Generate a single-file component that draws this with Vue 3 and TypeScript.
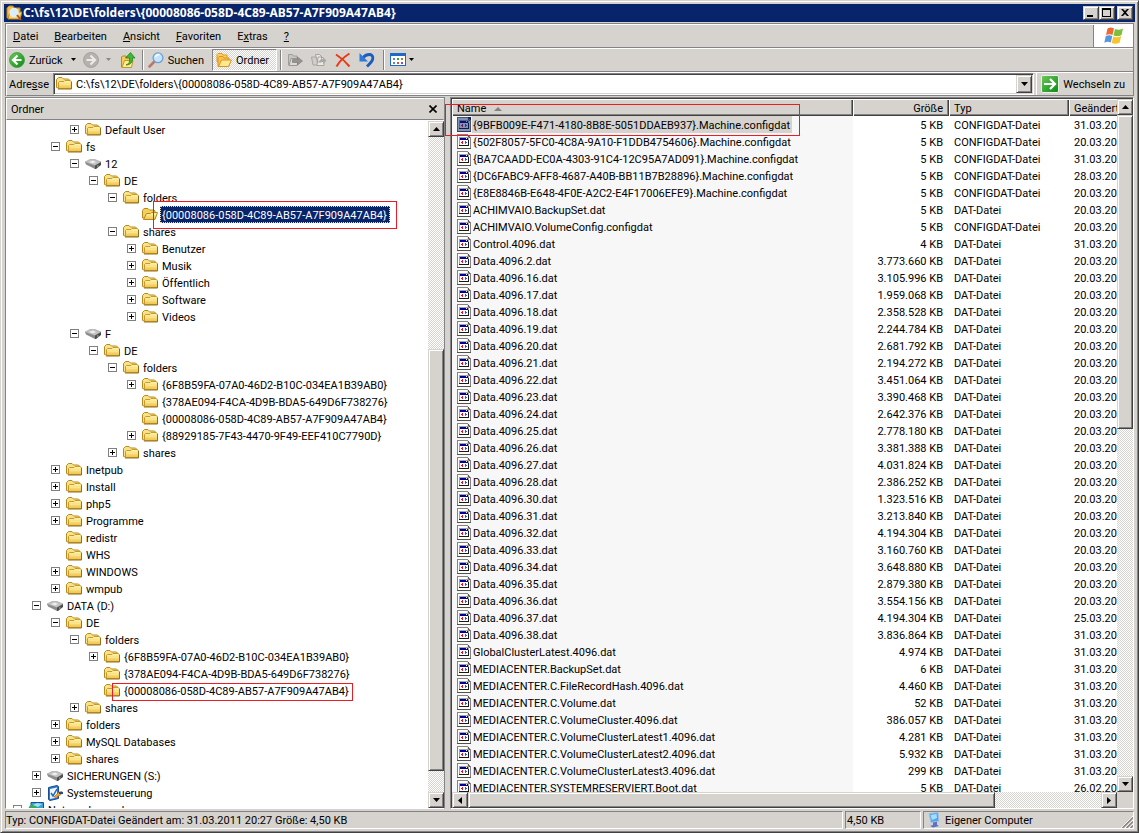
<script setup lang="ts">
import { ref } from 'vue'

interface TreeNode {
  level: number
  label: string
  icon: 'folder' | 'open' | 'drive' | 'panel' | 'network'
  toggle: '+' | '-' | ''
}
interface FileEntry {
  name: string
  size: string
  type: string
  date: string
}

const path = ref('C:\\fs\\12\\DE\\folders\\{00008086-058D-4C89-AB57-A7F909A47AB4}')

const menus = [
  ['', 'D', 'atei'],
  ['', 'B', 'earbeiten'],
  ['', 'A', 'nsicht'],
  ['', 'F', 'avoriten'],
  ['E', 'x', 'tras'],
  ['', '?', ''],
]

const node = (
  level: number,
  toggle: TreeNode['toggle'],
  label: string,
  icon: TreeNode['icon'] = 'folder',
): TreeNode => ({ level, toggle, label, icon })

const tree: TreeNode[] = [
  node(2, '+', 'Default User'),
  node(1, '-', 'fs'),
  node(2, '-', '12', 'drive'),
  node(3, '-', 'DE'),
  node(4, '-', 'folders'),
  node(5, '', '{00008086-058D-4C89-AB57-A7F909A47AB4}', 'open'),
  node(4, '-', 'shares'),
  node(5, '+', 'Benutzer'),
  node(5, '+', 'Musik'),
  node(5, '+', 'Öffentlich'),
  node(5, '+', 'Software'),
  node(5, '+', 'Videos'),
  node(2, '-', 'F', 'drive'),
  node(3, '-', 'DE'),
  node(4, '-', 'folders'),
  node(5, '+', '{6F8B59FA-07A0-46D2-B10C-034EA1B39AB0}'),
  node(5, '', '{378AE094-F4CA-4D9B-BDA5-649D6F738276}'),
  node(5, '', '{00008086-058D-4C89-AB57-A7F909A47AB4}'),
  node(5, '+', '{88929185-7F43-4470-9F49-EEF410C7790D}'),
  node(4, '+', 'shares'),
  node(1, '+', 'Inetpub'),
  node(1, '+', 'Install'),
  node(1, '+', 'php5'),
  node(1, '+', 'Programme'),
  node(1, '', 'redistr'),
  node(1, '', 'WHS'),
  node(1, '+', 'WINDOWS'),
  node(1, '+', 'wmpub'),
  node(0, '-', 'DATA (D:)', 'drive'),
  node(1, '-', 'DE'),
  node(2, '-', 'folders'),
  node(3, '+', '{6F8B59FA-07A0-46D2-B10C-034EA1B39AB0}'),
  node(3, '', '{378AE094-F4CA-4D9B-BDA5-649D6F738276}'),
  node(3, '', '{00008086-058D-4C89-AB57-A7F909A47AB4}'),
  node(2, '+', 'shares'),
  node(1, '+', 'folders'),
  node(1, '+', 'MySQL Databases'),
  node(1, '+', 'shares'),
  node(0, '+', 'SICHERUNGEN (S:)', 'drive'),
  node(0, '+', 'Systemsteuerung', 'panel'),
  node(-1, '-', 'Netzwerkumgebung', 'network'),
]
const selectedNode = 5

const file = (name: string, size: string, day = '20.03', type = 'DAT-Datei'): FileEntry => ({
  name,
  size: size + ' KB',
  type,
  date: day + '.2011',
})
const CONFIG = 'CONFIGDAT-Datei'

const files: FileEntry[] = [
  file('{9BFB009E-F471-4180-8B8E-5051DDAEB937}.Machine.configdat', '5', '31.03', CONFIG),
  file('{502F8057-5FC0-4C8A-9A10-F1DDB4754606}.Machine.configdat', '5', '20.03', CONFIG),
  file('{BA7CAADD-EC0A-4303-91C4-12C95A7AD091}.Machine.configdat', '5', '31.03', CONFIG),
  file('{DC6FABC9-AFF8-4687-A40B-BB11B7B28896}.Machine.configdat', '5', '28.03', CONFIG),
  file('{E8E8846B-E648-4F0E-A2C2-E4F17006EFE9}.Machine.configdat', '5', '20.03', CONFIG),
  file('ACHIMVAIO.BackupSet.dat', '5'),
  file('ACHIMVAIO.VolumeConfig.configdat', '5', '20.03', CONFIG),
  file('Control.4096.dat', '4', '31.03'),
  file('Data.4096.2.dat', '3.773.660'),
  file('Data.4096.16.dat', '3.105.996'),
  file('Data.4096.17.dat', '1.959.068'),
  file('Data.4096.18.dat', '2.358.528'),
  file('Data.4096.19.dat', '2.244.784'),
  file('Data.4096.20.dat', '2.681.792'),
  file('Data.4096.21.dat', '2.194.272'),
  file('Data.4096.22.dat', '3.451.064'),
  file('Data.4096.23.dat', '3.390.468'),
  file('Data.4096.24.dat', '2.642.376'),
  file('Data.4096.25.dat', '2.778.180'),
  file('Data.4096.26.dat', '3.381.388'),
  file('Data.4096.27.dat', '4.031.824'),
  file('Data.4096.28.dat', '2.386.252'),
  file('Data.4096.30.dat', '1.323.516'),
  file('Data.4096.31.dat', '3.213.840'),
  file('Data.4096.32.dat', '4.194.304'),
  file('Data.4096.33.dat', '3.160.760'),
  file('Data.4096.34.dat', '3.648.880'),
  file('Data.4096.35.dat', '2.879.380'),
  file('Data.4096.36.dat', '3.554.156'),
  file('Data.4096.37.dat', '4.194.304', '25.03'),
  file('Data.4096.38.dat', '3.836.864', '31.03'),
  file('GlobalClusterLatest.4096.dat', '4.974', '31.03'),
  file('MEDIACENTER.BackupSet.dat', '6', '31.03'),
  file('MEDIACENTER.C.FileRecordHash.4096.dat', '4.460', '31.03'),
  file('MEDIACENTER.C.Volume.dat', '52', '31.03'),
  file('MEDIACENTER.C.VolumeCluster.4096.dat', '386.057', '31.03'),
  file('MEDIACENTER.C.VolumeClusterLatest1.4096.dat', '4.281', '31.03'),
  file('MEDIACENTER.C.VolumeClusterLatest2.4096.dat', '5.932', '31.03'),
  file('MEDIACENTER.C.VolumeClusterLatest3.4096.dat', '299', '31.03'),
  file('MEDIACENTER.SYSTEMRESERVIERT.Boot.dat', '5', '26.02'),
]
const selectedFile = ref(0)

const treeThumb = { top: '32.3%', height: '64.5%' }
const listThumb = { top: '0%', height: '47.5%' }
const rowThumb = { left: '0%', width: '83.2%' }
</script>

<template>
  <div class="window">
    <svg class="defs" aria-hidden="true">
      <defs>
        <linearGradient id="gold" x1="0" y1="0" x2="0" y2="1">
          <stop offset="0" stop-color="#fff7b0" />
          <stop offset="1" stop-color="#efc24a" />
        </linearGradient>
        <linearGradient id="green" x1="0" y1="0" x2="1" y2="1">
          <stop offset="0" stop-color="#6cc95a" />
          <stop offset="1" stop-color="#0a8a14" />
        </linearGradient>
        <symbol id="i-folder" viewBox="0 0 16 16">
          <path d="M.5 11.500V3.500L2.500 1.500h3.500l1.500 1.500H12.500l1 1V12H2z" fill="#f7e28a" stroke="#b88a1e" />
          <path d="M2.500 12.500V6.500l1-1h4.500l1-1H14l1.500 1v7z" fill="url(#gold)" stroke="#c79a2a" />
          <path d="M4 8.500h10" stroke="#fbe58c" />
          <path d="M2 13h13.500V6" fill="none" stroke="#94701a" />
        </symbol>
        <symbol id="i-open" viewBox="0 0 16 16">
          <path d="M.5 11V3.500L2 1.500h4l1.500 1.500H12l1 1V11z" fill="#f3cf5c" stroke="#b88a1e" />
          <path d="M1.500 12.500 4.500 6.500h4l1-1h6L13 12.500z" fill="url(#gold)" stroke="#b88a1e" />
        </symbol>
        <symbol id="i-drive" viewBox="0 0 16 16">
          <path d="M0 6 5 3.500h5l6 2.500-6 4z" fill="#c2c2c2" stroke="#a0a0a0" stroke-width=".6" />
          <path d="M0 6 10 9.500v3.500L1 8.500z" fill="#8c8c8c" />
          <path d="M10 9.500l6-3.500v3l-5 4h-1z" fill="#4c4c4c" />
          <path d="M4 6 8 4.500l3 1.500L8 7.500z" fill="#eee" />
          <path d="M12 10h1.500" stroke="#8fdc8f" />
        </symbol>
        <symbol id="i-panel" viewBox="0 0 16 16">
          <path d="M1.500 2.500 10 .5l1.500 1v12L3 15.500l-1.500-1z" fill="#2f78d0" stroke="#184c93" />
          <path d="M3 4l7-1.500v10L3 14z" fill="#eef6ff" />
          <path d="M4 8l2 3 4-7" fill="none" stroke="#1b62c4" stroke-width="1.500" />
          <path d="M7 12l5-5 3-.5-1 3-5 3z" fill="#f4a434" stroke="#a65d13" stroke-width=".6" />
          <path d="M12 7h4v2h-4z" fill="#274a8e" />
        </symbol>
        <symbol id="i-network" viewBox="0 0 16 16">
          <path d="M3 .5h12.500v9H3z" fill="#35a3dc" stroke="#1a4f93" />
          <circle cx="5" cy="7" r="4.500" fill="#36ad5b" />
          <path d="M5 3l4-2 5 1-4 3z" fill="#9de3f5" />
        </symbol>
        <symbol id="i-file" viewBox="0 0 14 15">
          <g shape-rendering="crispEdges">
            <path d="M0 0h11v1h1v1h1v1h1v12H0z" fill="#848284" />
            <path d="M1 1h9v3h3v10H1z" fill="#fffff7" />
            <path d="M11 1h1v2h1v1h-3V3h1zM0 14h14v1H0z" fill="#525152" />
            <path d="M10 1h1v2h-1z" fill="#e7e3de" />
            <path d="M2 3h10v9H2z" fill="#a5a2a5" />
            <path d="M2 12h10V6h-1v5H2z" fill="#181818" />
            <path d="M3 4h8v2H3z" fill="#00009c" />
            <path d="M9 4h1v1H9z" fill="#ffff9c" />
            <path d="M3 6h8v5H3z" fill="#fff" />
            <path d="M4 8h1v1H4zM5 7h1v3H5z" fill="#de1029" />
            <path d="M8 7h1v1h1v1H8z" fill="#215ae7" />
            <path d="M8 9h1v1H8z" fill="#18a542" />
          </g>
        </symbol>
      </defs>
    </svg>

    <header class="title-bar">
      <svg class="icon" viewBox="0 0 16 16" aria-hidden="true">
        <path d="M1 13V3l2-2h4l1 2h6v10z" fill="#f2bf48" stroke="#c6851b" />
        <path d="M2 14 4 7h12l-2 7z" fill="#f7d76d" stroke="#c6851b" />
        <circle cx="8" cy="7.500" r="4" fill="#d7effd" stroke="#e6eef4" stroke-width="1.500" />
        <path d="M11 10l4 5" stroke="#a8552b" stroke-width="2" />
      </svg>
      <h1>{{ path }}</h1>
      <div class="caption-buttons">
        <button type="button" class="raised" aria-label="Minimieren">
          <svg viewBox="0 0 12 10"><path d="M2 7h6v2H2z" /></svg>
        </button>
        <button type="button" class="raised" aria-label="Maximieren">
          <svg viewBox="0 0 12 10"><path d="M1 0h9v9H1zm1 2v6h7V2z" fill-rule="evenodd" /></svg>
        </button>
        <button type="button" class="raised close" aria-label="Schließen">
          <svg viewBox="0 0 12 10"><path d="M2 1h2l2 2 2-2h2L7 4.500 10 8H8L6 6 4 8H2l3-3.500z" /></svg>
        </button>
      </div>
    </header>

    <div class="bars">
      <nav class="band menu">
        <button v-for="m in menus" :key="m[1]" type="button">{{ m[0] }}<u>{{ m[1] }}</u>{{ m[2] }}</button>
        <span class="logo">
          <svg viewBox="0 0 20 18" aria-label="Windows">
            <path d="M3.500 1.500c2.500-1.500 4.500-1 6.500 0L8.500 8C6.500 7 4.500 7 2 8z" fill="#ee6a34" />
            <path d="M11 2c2.500 1 5 1 8-.5L17.500 8c-2.500 1.500-5.500 1.500-8 .5z" fill="#7fbe3b" />
            <path d="M1.800 9c2.500-1.200 4.500-1 6.500 0L6.800 15.500c-2-1-4-1-6.500.2z" fill="#5696e0" />
            <path d="M9.200 9.500c2.500 1 5 1 8-.5l-1.500 6.500c-2.500 1.500-5.500 1.700-8 .5z" fill="#f6c52c" />
          </svg>
        </span>
      </nav>

      <div class="band toolbar" role="toolbar" aria-label="Standardschaltflächen">
        <button type="button" class="tool back">
          <svg class="icon" viewBox="0 0 16 16">
            <circle cx="8" cy="8" r="7.500" fill="url(#green)" stroke="#3c9d3c" stroke-width=".8" />
            <path d="M8.500 3.500 4 8l4.500 4.500M4.500 8h8" fill="none" stroke="#fff" stroke-width="2.200" />
          </svg>
          <span>Zurück</span>
          <svg class="arrow" viewBox="0 0 7 4"><path d="M1 0h5L3.500 3z" /></svg>
        </button>
        <button type="button" class="tool forward" aria-label="Vorwärts" disabled>
          <svg class="icon" viewBox="0 0 16 16">
            <circle cx="8" cy="8" r="7.500" fill="#b4b2af" stroke="#9d9b98" stroke-width=".8" />
            <path d="M7.500 3.500 12 8l-4.500 4.500M11.500 8h-8" fill="none" stroke="#eceae6" stroke-width="2.200" />
          </svg>
          <svg class="arrow" viewBox="0 0 7 4"><path d="M1 0h5L3.500 3z" fill="#888" /></svg>
        </button>
        <button type="button" class="tool up" aria-label="Aufwärts">
          <svg class="icon" viewBox="0 0 16 16">
            <path d="M1.500 15V5l1-1H6l1 1.500h4V15z" fill="#f2cd58" stroke="#b98a20" />
            <path d="M2 15.500 4.500 8.500h8.500L11.500 15.500z" fill="#ffec98" stroke="#c49527" />
            <path d="M6 13c3-1 4-3 3.500-7H5.500l5-5.500L15 6h-2.500c.5 4-2 7-6.500 7z" fill="#43b539" stroke="#137a18" stroke-width=".7" />
          </svg>
        </button>
        <i class="separator"></i>
        <button type="button" class="tool search">
          <svg class="icon" viewBox="0 0 16 16">
            <path d="M7 9 1.500 14.500" stroke="#b9776a" stroke-width="2.500" stroke-linecap="round" />
            <circle cx="10" cy="5.800" r="4.900" fill="#c3e4fb" stroke="#6d9fd6" stroke-width="1.300" />
            <path d="M7.500 5c.5-2 2-2.500 4-2.500" fill="none" stroke="#fff" stroke-width="1.500" />
          </svg>
          <span>Suchen</span>
        </button>
        <button type="button" class="tool pressed" aria-pressed="true">
          <svg class="icon" viewBox="0 0 16 16">
            <path d="M1 10V2.500L2 1.500h4l1 1.500h4v6z" fill="#f9cf61" stroke="#e09a2a" />
            <path d="M2 14.500V5.500l1-1h4L8 6h5v8z" fill="#f7c34e" stroke="#dc9222" />
            <path d="M2.500 14.500 5.500 8h10l-3 6.500z" fill="#ffe98e" stroke="#dc9222" />
          </svg>
          <span>Ordner</span>
        </button>
        <i class="separator tight"></i>
        <button type="button" class="tool" aria-label="Verschieben nach" disabled>
          <svg class="icon" viewBox="0 0 16 16">
            <path d="M1.500 13V2.500h4l1 1.500H10v9z" fill="#c7c5c1" stroke="#a09e9a" />
            <path d="M2 13.500 4 6.500h8l-2 7z" fill="#dddbd7" stroke="#9b9995" />
            <path d="M5.500 7.500h5V5l5 4-5 4v-2.500h-5z" fill="#969490" stroke="#777" stroke-width=".6" />
          </svg>
        </button>
        <button type="button" class="tool" aria-label="Kopieren nach" disabled>
          <svg class="icon" viewBox="0 0 16 16">
            <path d="M.5 5h4l1 1.500h4.500L8.500 13H2z" fill="#d0ceca" stroke="#a8a6a2" />
            <path d="M4.500 2.500h4l2 2v5.500h-4zM7 5h4l2 2v6.500H6z" fill="#e9e7e3" stroke="#999793" stroke-width=".8" />
            <path d="M8 10c0-2 2-3 4-3V5l3.500 3.500L12 12v-2H8z" fill="#aaa8a4" />
          </svg>
        </button>
        <button type="button" class="tool" aria-label="Löschen">
          <svg class="icon" viewBox="0 0 16 16">
            <path d="M1 2.500C5 5 10 9 14.500 14.500M14.500 1.500C9 5 4.500 9 1.500 14.500" fill="none" stroke="#e83a16" stroke-width="2" />
          </svg>
        </button>
        <button type="button" class="tool" aria-label="Rückgängig">
          <svg class="icon" viewBox="0 0 16 16">
            <path d="M4 6C7 1.500 14.500 1 13.800 6.500 13.500 9.500 11 11.500 8 14.500" fill="none" stroke="#1c5cc0" stroke-width="2.800" />
            <path d="M.5 1v8.500H9z" fill="#2d79d8" />
          </svg>
        </button>
        <i class="separator"></i>
        <button type="button" class="tool views" aria-label="Ansichten">
          <svg class="icon" viewBox="0 0 16 16" shape-rendering="crispEdges">
            <path d="M0 1h16v13H0z" fill="#1f69c9" />
            <path d="M1 4h14v9H1z" fill="#fff" />
            <path d="M3 6h2v2H3zM3 10h2v2H3z" fill="#5a87c8" />
            <path d="M7 6h2v2H7z" fill="#37a33b" /><path d="M7 10h2v2H7z" fill="#d9532b" />
            <path d="M11 6h2v2h-2z" fill="#b5772c" /><path d="M11 10h2v2h-2z" fill="#6a5ac8" />
          </svg>
          <svg class="arrow" viewBox="0 0 7 4"><path d="M1 0h5L3.500 3z" /></svg>
        </button>
      </div>

      <form class="band address" @submit.prevent>
        <label for="address">Adre<u>s</u>se</label>
        <div class="combo">
          <svg class="icon"><use href="#i-folder" /></svg>
          <input id="address" v-model="path" type="text" spellcheck="false" />
          <button type="button" class="raised" aria-label="Verlauf">
            <svg viewBox="0 0 7 4"><path d="M0 0h7L3.500 4z" /></svg>
          </button>
        </div>
        <button type="submit" class="go">
          <svg viewBox="0 0 18 18">
            <rect x=".5" y=".5" width="17" height="17" rx="1.500" fill="url(#green)" stroke="#e6f1e2" />
            <path d="M9 4l5 5-5 5M13.500 9H3" fill="none" stroke="#fff" stroke-width="2.200" />
          </svg>
          <span>Wechseln zu</span>
        </button>
      </form>
    </div>

    <main class="workspace">
      <section class="tree-pane">
        <div class="tree-head">
          <h2>Ordner</h2>
          <button type="button" aria-label="Ordnerleiste schließen">
            <svg viewBox="0 0 8 8"><path d="M.5.5l7 7M7.500.5l-7 7" stroke="#000" stroke-width="1.600" /></svg>
          </button>
        </div>
        <div class="tree-body">
          <ul class="tree" role="tree">
            <li
              v-for="(n, i) in tree"
              :key="i"
              role="treeitem"
              :aria-selected="i === selectedNode"
              :style="{ paddingLeft: 26 + n.level * 19 + 'px' }"
            >
              <button v-if="n.toggle" type="button" class="toggle" :aria-label="n.label + ' umschalten'">
                <svg viewBox="0 0 9 9" shape-rendering="crispEdges">
                  <path d="M0 0h9v9H0z" fill="#808080" />
                  <path d="M1 1h7v7H1z" fill="#fff" />
                  <path d="M2 4h5v1H2z" />
                  <path v-if="n.toggle === '+'" d="M4 2h1v5H4z" />
                </svg>
              </button>
              <i v-else class="toggle"></i>
              <svg class="icon"><use :href="'#i-' + n.icon" /></svg>
              <span class="label" :class="{ selected: i === selectedNode }">{{ n.label }}</span>
            </li>
          </ul>
          <div class="scroll vertical">
            <button type="button" class="raised" aria-label="Nach oben"><svg viewBox="0 0 7 4"><path d="M0 4h7L3.500 0z" /></svg></button>
            <div class="track"><div class="thumb raised" :style="treeThumb"></div></div>
            <button type="button" class="raised" aria-label="Nach unten"><svg viewBox="0 0 7 4"><path d="M0 0h7L3.500 4z" /></svg></button>
          </div>
        </div>
      </section>

      <section class="list-pane">
        <div class="viewport">
          <table>
            <colgroup>
              <col class="c-name" /><col class="c-size" /><col class="c-type" /><col class="c-date" />
            </colgroup>
            <thead>
              <tr>
                <th>Name<svg class="sort" viewBox="0 0 8 4"><path d="M0 4h8L4 0z" fill="#848284" /></svg></th>
                <th class="num">Größe</th>
                <th>Typ</th>
                <th>Geändert am</th>
              </tr>
            </thead>
            <tbody>
              <tr v-for="(f, i) in files" :key="f.name" :class="{ current: i === selectedFile }" @click="selectedFile = i">
                <td class="name">
                  <div class="entry">
                    <svg class="file-icon"><use href="#i-file" /></svg>
                    <span>{{ f.name }}</span>
                  </div>
                </td>
                <td class="num">{{ f.size }}</td>
                <td>{{ f.type }}</td>
                <td>{{ f.date }}</td>
              </tr>
            </tbody>
          </table>
        </div>
        <div class="scroll vertical">
          <button type="button" class="raised" aria-label="Nach oben"><svg viewBox="0 0 7 4"><path d="M0 4h7L3.500 0z" /></svg></button>
          <div class="track"><div class="thumb raised" :style="listThumb"></div></div>
          <button type="button" class="raised" aria-label="Nach unten"><svg viewBox="0 0 7 4"><path d="M0 0h7L3.500 4z" /></svg></button>
        </div>
        <div class="scroll horizontal">
          <button type="button" class="raised" aria-label="Nach links"><svg viewBox="0 0 4 7"><path d="M4 0v7L0 3.500z" /></svg></button>
          <div class="track"><div class="thumb raised" :style="rowThumb"></div></div>
          <button type="button" class="raised" aria-label="Nach rechts"><svg viewBox="0 0 4 7"><path d="M0 0v7l4-3.500z" /></svg></button>
        </div>
      </section>

      <div class="mark mark-tree"></div>
      <div class="mark mark-data"></div>
      <div class="mark mark-file"></div>
    </main>

    <footer class="status">
      <span class="info">Typ: CONFIGDAT-Datei Geändert am: 31.03.2011 20:27 Größe: 4,50 KB</span>
      <span class="size">4,50 KB</span>
      <span class="zone">
        <svg class="icon" viewBox="0 0 16 16" aria-hidden="true">
          <path d="M3 1.500 12 .5l1 8.500-8 1.500z" fill="#49a7ee" stroke="#a9bfdd" />
          <path d="M4.500 3l6-1 .5 4-5 2z" fill="#a6dcff" />
          <path d="M7 10.500l4-.7v3l2 1.200-6 1.500-3-1.500 3-1z" fill="#5b72c4" />
          <path d="M2 12l3-1 1 1.500-3 1.500z" fill="#c9cfe0" />
        </svg>
        <span>Eigener Computer</span>
        <svg class="grip" viewBox="0 0 12 12" aria-hidden="true">
          <path d="M0 12 12 0M4 12l8-8M8 12l4-4" stroke="#fff" />
          <path d="M1.500 12 12 1.500M5.500 12 12 5.500M9.500 12 12 9.500" stroke="#848284" stroke-width="1.500" />
        </svg>
      </span>
    </footer>
  </div>
</template>

<style>
body {
  background: #d6d3ce;
}
</style>

<style scoped>
* {
  box-sizing: border-box;
}
.window {
  display: flex;
  flex-direction: column;
  height: 100vh;
  padding: 3px;
  overflow: hidden;
  border: 1px solid;
  border-color: #d6d3ce #424142 #424142 #d6d3ce;
  box-shadow: inset 1px 1px #fff, inset -1px -1px #848284;
  background: #d6d3ce;
  color: #000;
  font: 11px/17px Roboto, "Liberation Sans", sans-serif;
}
.defs {
  position: absolute;
  width: 0;
  height: 0;
}
button,
input {
  margin: 0;
  padding: 0;
  border: 0;
  border-radius: 0;
  background: transparent;
  color: inherit;
  font: inherit;
}
button {
  display: flex;
  align-items: center;
  flex: none;
}
svg {
  display: block;
  flex: none;
}
h1,
h2 {
  margin: 0;
  font-size: 11px;
}
.icon {
  width: 16px;
  height: 16px;
}
.raised {
  background: #d6d3ce;
  border: 1px solid;
  border-color: #d6d3ce #424142 #424142 #d6d3ce;
  box-shadow: inset 1px 1px #fff, inset -1px -1px #848284;
  justify-content: center;
}

/* title bar */
.title-bar {
  display: flex;
  align-items: center;
  flex: none;
  height: 18px;
  padding: 0 2px;
  background: #08246b;
  color: #fff;
}
.title-bar h1 {
  flex: 1;
  padding-left: 1px;
  font: bold 12px/18px "Noto Sans", "Open Sans", sans-serif;
  white-space: nowrap;
}
.caption-buttons {
  display: flex;
  color: #000;
}
.caption-buttons button {
  width: 16px;
  height: 14px;
}
.caption-buttons .close {
  margin-left: 2px;
}
.caption-buttons svg {
  width: 12px;
  height: 10px;
}

/* bands */
.bars {
  flex: none;
  margin: 1px 1px 0;
  border: 1px solid #848284;
  border-bottom: 0;
}
.band {
  display: flex;
  align-items: center;
  height: 24px;
  border-top: 1px solid #fff;
  border-bottom: 1px solid #848284;
  border-left: 1px solid #fff;
}
.menu button {
  padding: 0 8px;
  display: block;
}
.menu button:first-child {
  padding-left: 6px;
}
.logo {
  display: flex;
  align-items: center;
  justify-content: center;
  align-self: stretch;
  width: 40px;
  margin-left: auto;
  background: #fff;
  border-left: 1px solid #848284;
}
.logo svg {
  width: 20px;
  height: 18px;
}
.tool {
  height: 22px;
  padding: 0 4px;
  gap: 4px;
}
.back {
  padding: 0 4px 0 2px;
}
.back .arrow {
  margin-left: 3px;
}
.forward {
  padding: 0 4px 0 2px;
  gap: 6px;
}
.up {
  padding: 0 2px 0 4px;
}
.arrow {
  width: 7px;
  height: 4px;
}
.separator {
  flex: none;
  width: 2px;
  height: 20px;
  margin: 0 3px 0 4px;
  border-left: 1px solid #848284;
  border-right: 1px solid #fff;
}
.tight {
  margin: 0 1px 0 3px;
}
.search {
  padding: 0 8px 0 1px;
}
.pressed {
  width: 65px;
  padding: 0 3px;
  border: 1px solid;
  border-color: #848284 #fff #fff #848284;
  background: repeating-conic-gradient(#fff 0 25%, #d6d3ce 0 50%) 0 0 / 2px 2px;
}
.views {
  padding: 0 2px;
  gap: 2px;
}

/* address */
.address label {
  padding: 0 4px 0 2px;
}
.combo {
  display: flex;
  align-items: center;
  flex: 1;
  height: 22px;
  padding: 1px 1px 1px 2px;
  background: #fff;
  border: 1px solid;
  border-color: #848284 #fff #fff #848284;
  box-shadow: inset 1px 1px #424142, inset -1px -1px #d6d3ce;
}
.combo input {
  flex: 1;
  min-width: 0;
  padding-left: 4px;
  outline: 0;
}
.combo button {
  width: 16px;
  height: 18px;
}
.combo button svg,
.scroll.vertical button svg {
  width: 7px;
  height: 4px;
}
.go {
  height: 22px;
  margin-left: 2px;
  padding: 0 8px 0 4px;
  gap: 4px;
  border-left: 1px solid #fff;
}
.go svg {
  width: 18px;
  height: 18px;
}

/* workspace */
.workspace {
  position: relative;
  display: flex;
  flex: 1;
  min-height: 0;
  gap: 5px;
  margin: 1px 1px 0;
}
.tree-pane {
  display: flex;
  flex-direction: column;
  flex: none;
  width: 440px;
  border: 1px solid #848284;
  border-bottom-color: #fff;
}
.tree-head {
  display: flex;
  align-items: center;
  justify-content: space-between;
  flex: none;
  height: 22px;
  padding: 0 6px 0 4px;
  border: 1px solid;
  border-color: #fff #d6d3ce #848284 #fff;
}
.tree-head h2 {
  font-weight: normal;
}
.tree-head svg {
  width: 8px;
  height: 8px;
}
.tree-body {
  display: flex;
  flex: 1;
  min-height: 0;
  padding-top: 1px;
  background: #fff;
}
.tree {
  flex: 1;
  margin: 0;
  padding: 0;
  overflow: hidden;
  list-style: none;
}
.tree li {
  display: flex;
  align-items: center;
  height: 17px;
  white-space: nowrap;
}
.tree .icon {
  align-self: flex-end;
}
.toggle,
.toggle svg {
  width: 9px;
  height: 9px;
}
.toggle {
  flex: none;
  margin-right: 6px;
}
.label {
  height: 17px;
  margin-left: 2px;
  padding: 1px 2px 0;
}
.label.selected {
  background: #08246b;
  color: #fff;
  outline: 1px dotted #f7db94;
  outline-offset: -1px;
  padding-right: 3px;
}

/* scroll bars */
.scroll {
  display: flex;
}
.scroll.vertical {
  flex-direction: column;
  width: 16px;
}
.scroll button {
  width: 16px;
  height: 16px;
}
.scroll.horizontal button svg {
  width: 4px;
  height: 7px;
}
.track {
  position: relative;
  flex: 1;
  background: repeating-conic-gradient(#fff 0 25%, #d6d3ce 0 50%) 0 0 / 2px 2px;
}
.thumb {
  position: absolute;
}
.vertical .thumb {
  width: 100%;
}
.horizontal .thumb {
  height: 100%;
}

/* file list */
.list-pane {
  display: grid;
  grid-template: minmax(0, 1fr) 16px / minmax(0, 1fr) 16px;
  flex: 1;
  min-width: 0;
  border: 1px solid;
  border-color: #848284 #fff #fff #848284;
  box-shadow: inset 1px 1px #424142;
  padding: 1px 0 0 1px;
}
.viewport {
  overflow: hidden;
  background: #fff;
}
table {
  width: 760px;
  table-layout: fixed;
  border-collapse: separate;
  border-spacing: 0;
}
.c-name {
  width: 401px;
}
.c-size {
  width: 96px;
}
.c-type {
  width: 120px;
}
th,
td {
  height: 17px;
  padding: 2px 6px 0 5px;
  line-height: 15px;
  text-align: left;
  font-weight: normal;
  white-space: nowrap;
}
th {
  background: #d6d3ce;
  box-shadow: inset 1px 1px #fff, inset -1px -1px #424142, inset -2px -2px #848284;
}
.num {
  text-align: right;
}
.sort {
  display: inline-block;
  width: 8px;
  height: 4px;
  margin-left: 8px;
  vertical-align: middle;
}
td.name {
  padding: 0 0 0 5px;
  background: #f7f7f7;
}
.entry {
  display: flex;
  align-items: center;
  height: 17px;
}
.file-icon {
  width: 14px;
  height: 15px;
  margin-right: 1px;
}
.entry span {
  height: 17px;
  padding: 2px 2px 0 1px;
}
.current .entry span {
  background: #d6d3ce;
}
.current .file-icon {
  background: #08246b;
}
.current .file-icon use {
  opacity: 0.5;
}

/* red markings */
.mark {
  position: absolute;
  border: 1px solid #ed1c24;
  pointer-events: none;
}
.mark-tree {
  left: 148px;
  top: 104px;
  width: 244px;
  height: 28px;
}
.mark-data {
  left: 107px;
  top: 586px;
  width: 241px;
  height: 18px;
}
.mark-file {
  left: 440px;
  top: 7px;
  width: 355px;
  height: 32px;
}

/* status bar */
.status {
  display: flex;
  gap: 2px;
  flex: none;
  padding: 2px 1px 0;
}
.status > span {
  display: flex;
  align-items: center;
  height: 18px;
  border: 1px solid;
  border-color: #848284 #fff #fff #848284;
  white-space: nowrap;
}
.info {
  flex: 1;
}
.size {
  width: 76px;
  padding-left: 1px;
}
.zone {
  width: 211px;
  padding-left: 2px;
  gap: 3px;
}
.grip {
  align-self: flex-end;
  width: 12px;
  height: 12px;
  margin-left: auto;
}
</style>
